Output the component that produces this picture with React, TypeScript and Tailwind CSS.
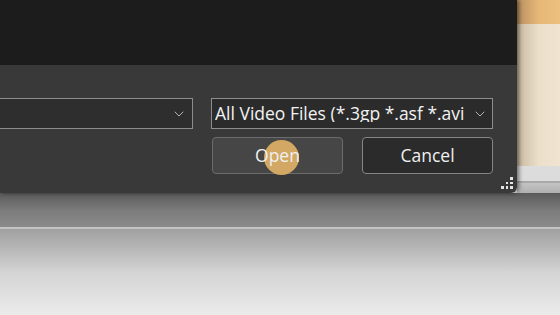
import { ChevronDown } from 'lucide-react';

const font = { fontFamily: '"Open Sans", "Noto Sans", sans-serif' };

function Grip() {
    const dots = [
        [2, 0],
        [1, 1], [2, 1],
        [0, 2], [1, 2], [2, 2],
    ];
    return (
        <div className="grid grid-cols-3 grid-rows-3 gap-[2px] w-[12px] h-[12px]">
            {[0, 1, 2].flatMap((r) =>
                [0, 1, 2].map((c) => {
                    const on = dots.some(([x, y]) => x === c && y === r);
                    return <div key={`${r}-${c}`} className={on ? 'bg-[#e4e4e4]' : ''} />;
                })
            )}
        </div>
    );
}

export default function App() {
    return (
        <div className="w-[560px] h-[315px] overflow-hidden flex flex-col bg-[#e9e9e9]" style={font}>
            <div className="flex h-[193px]">
                {/* dialog */}
                <div className="w-[517px] shrink-0 flex flex-col rounded-br-[6px] overflow-hidden shadow-[2px_0_4px_rgba(0,0,0,0.5)] z-10">
                    <div className="h-[65px] bg-[#1c1c1c]" />
                    <div className="flex-1 bg-[#393939] flex flex-col pt-[33px] pr-[24px] relative">
                        <div className="flex gap-[18px]">
                            <div className="w-[193px] shrink-0 h-[31px] bg-[#2e2e2e] border-y border-r border-[#8d8d8d] flex items-center justify-end pr-[5px]">
                                <ChevronDown className="w-[16px] h-[16px] text-[#d0d0d0]" strokeWidth={1.25} />
                            </div>
                            <div className="flex-1 min-w-0 h-[31px] bg-[#2b2b2b] border border-[#8d8d8d] flex items-center pl-[3px] pr-[4px] gap-[3px]">
                                <span className="flex-1 min-w-0 overflow-hidden whitespace-nowrap text-[17.5px] leading-none text-[#f2f2f2]">
                                    All Video Files (*.3gp *.asf *.avi *.divx)
                                </span>
                                <ChevronDown className="w-[16px] h-[16px] text-[#d0d0d0] shrink-0" strokeWidth={1.25} />
                            </div>
                        </div>
                        <div className="flex justify-end gap-[19px] mt-[8px]">
                            <button className="relative w-[131px] h-[37px] rounded-[4px] bg-[#464646] border border-[#6c6c6c] text-[17.5px] text-[#f0f0f0]">
                                {/* click highlight under the cursor */}
                                <span className="absolute left-[51px] top-[2px] w-[35px] h-[35px] rounded-full bg-[#d2a864]" />
                                <span className="relative">Open</span>
                            </button>
                            <button className="w-[131px] h-[37px] rounded-[4px] bg-[#2b2b2b] border border-[#858585] text-[17.5px] text-[#f0f0f0]">
                                Cancel
                            </button>
                        </div>
                        <div className="absolute right-[4px] bottom-[4px]">
                            <Grip />
                        </div>
                    </div>
                </div>
                {/* desktop strip on the right */}
                <div className="flex-1 flex flex-col">
                    <div className="h-[24px] bg-gradient-to-r from-[#b89060] via-[#e6b878] to-[#ecc080]" />
                    <div className="h-[142px] bg-gradient-to-r from-[#c8b8a0] via-[#ecdfca] to-[#f0e4d2]" />
                    <div className="h-[15px] bg-[#dcdcdc]" />
                    <div className="h-[2px] bg-[#a8a8a8]" />
                    <div className="flex-1 bg-gradient-to-b from-[#c4c4c4] to-[#b0b0b0]" />
                </div>
            </div>
            {/* desktop below the dialog */}
            <div className="flex-1 flex flex-col">
                <div className="h-[34px] bg-gradient-to-b from-[#5a5a5a] via-[#7c7c7c] to-[#8a8a8a]" />
                <div className="h-[2px] bg-[#c4c4c4]" />
                <div className="flex-1 bg-gradient-to-b from-[#a0a0a0] via-[#d4d4d4] to-[#ebebeb]" />
            </div>
        </div>
    );
}
